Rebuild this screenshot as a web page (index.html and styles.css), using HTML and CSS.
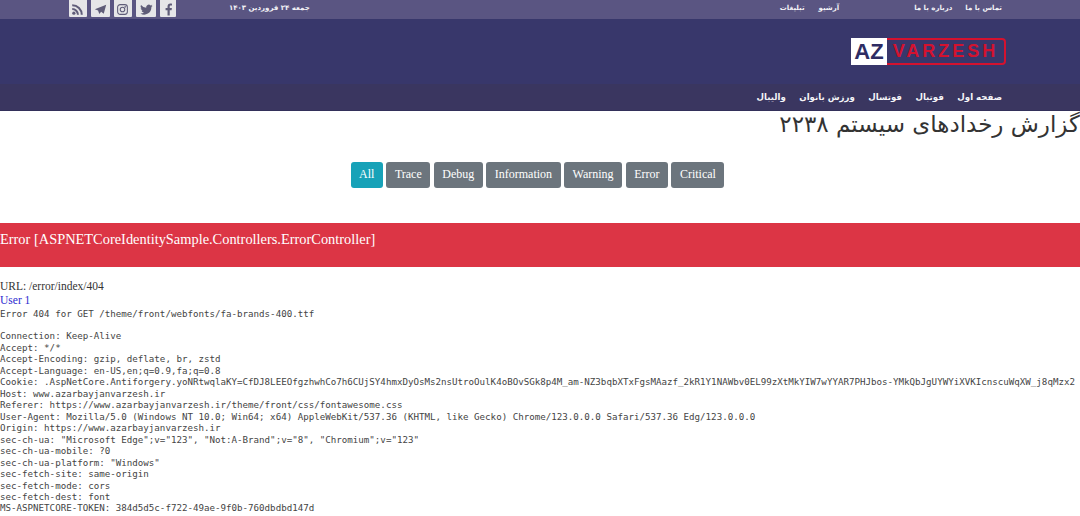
FILE: index.html
```html
<!DOCTYPE html>
<html lang="fa">
<head>
<meta charset="utf-8">
<title>گزارش رخدادهای سیستم</title>
<link rel="stylesheet" href="styles.css">
</head>
<body>
<header class="site-header">
  <div class="topbar">
    <nav class="social">
      <a class="social-btn"><svg viewBox="0 0 16 16"><circle cx="3.5" cy="12.5" r="2"/><path d="M1.5 6.2a8.3 8.3 0 0 1 8.3 8.3H7.3a5.8 5.8 0 0 0-5.8-5.8zM1.500 1.500a13 13 0 0 1 13 13H12A10.500 10.500 0 0 0 1.500 4z"/></svg></a>
      <a class="social-btn"><svg viewBox="0 0 16 16"><path d="M15 2 1 7.600l4 1.500 1.500 4.400 2.300-2.600 3.200 2.400z"/></svg></a>
      <a class="social-btn"><svg viewBox="0 0 16 16" class="outline"><rect x="2" y="2" width="12" height="12" rx="3.200"/><circle cx="8" cy="8" r="2.800"/><circle cx="11.400" cy="4.600" r=".4"/></svg></a>
      <a class="social-btn tw"><svg viewBox="0 0 16 16"><path d="M15.500 3.500c-.6.300-1.200.4-1.800.5.600-.4 1.100-1 1.300-1.700-.6.300-1.300.6-2 .7A3.100 3.100 0 0 0 7.700 5.800 8.900 8.900 0 0 1 1.300 2.500a3.100 3.100 0 0 0 1 4.200c-.5 0-1-.2-1.400-.4 0 1.500 1.100 2.800 2.500 3.100-.5.100-.9.100-1.400 0 .4 1.200 1.500 2.100 2.900 2.200A6.300 6.300 0 0 1 .5 12.900 8.800 8.800 0 0 0 14 5c.6-.4 1.100-.9 1.500-1.500z"/></svg></a>
      <a class="social-btn narrow"><svg viewBox="0 0 10 16"><path d="M6.500 15.500V8.800h2.300l.4-2.700H6.500V4.500c0-.8.300-1.300 1.400-1.300h1.400V.8C9 .8 8.200.700 7.300.700 5.200.700 3.800 2 3.800 4.200v1.900H1.400v2.700h2.400v6.700z"/></svg></a>
    </nav>
    <span class="date">جمعه ۲۴ فروردین ۱۴۰۳</span>
    <nav class="toplinks">
      <a class="wide-link">تبلیغات</a>
      <a class="archive">آرشیو</a>
      <a class="about">درباره با ما</a>
      <a>تماس با ما</a>
    </nav>
  </div>
  <div class="brand">
    <div class="logo"><span class="logo-az">AZ</span><span class="logo-varzesh">VARZESH</span></div>
  </div>
  <nav class="mainnav">
    <a>صفحه اول</a>
    <a>فوتبال</a>
    <a>فوتسال</a>
    <a>ورزش بانوان</a>
    <a>والیبال</a>
  </nav>
</header>
<main>
  <h1 class="page-title">گزارش رخدادهای سیستم ۲۲۳۸</h1>
  <div class="filters">
    <a class="btn btn-active">All</a>
    <a class="btn">Trace</a>
    <a class="btn">Debug</a>
    <a class="btn">Information</a>
    <a class="btn">Warning</a>
    <a class="btn">Error</a>
    <a class="btn">Critical</a>
  </div>
  <div class="log-head">Error [ASPNETCoreIdentitySample.Controllers.ErrorController]</div>
  <div class="log-meta">URL: /error/index/404</div>
  <div class="log-user">User 1</div>
  <pre class="log-body">Error 404 for GET /theme/front/webfonts/fa-brands-400.ttf

Connection: Keep-Alive
Accept: */*
Accept-Encoding: gzip, deflate, br, zstd
Accept-Language: en-US,en;q=0.9,fa;q=0.8
Cookie: .AspNetCore.Antiforgery.yoNRtwqlaKY=CfDJ8LEEOfgzhwhCo7h6CUjSY4hmxDyOsMs2nsUtroOulK4oBOvSGk8p4M_am-NZ3bqbXTxFgsMAazf_2kR1Y1NAWbv0EL99zXtMkYIW7wYYAR7PHJbos-YMkQbJgUYWYiXVKIcnscuWqXW_j8qMzx2
Host: www.azarbayjanvarzesh.ir
Referer: https://www.azarbayjanvarzesh.ir/theme/front/css/fontawesome.css
User-Agent: Mozilla/5.0 (Windows NT 10.0; Win64; x64) AppleWebKit/537.36 (KHTML, like Gecko) Chrome/123.0.0.0 Safari/537.36 Edg/123.0.0.0
Origin: https://www.azarbayjanvarzesh.ir
sec-ch-ua: "Microsoft Edge";v="123", "Not:A-Brand";v="8", "Chromium";v="123"
sec-ch-ua-mobile: ?0
sec-ch-ua-platform: "Windows"
sec-fetch-site: same-origin
sec-fetch-mode: cors
sec-fetch-dest: font
MS-ASPNETCORE-TOKEN: 384d5d5c-f722-49ae-9f0b-760dbdbd147d</pre>
</main>
</body>
</html>
```
FILE: styles.css
```css
* { box-sizing: border-box; }
html, body { margin: 0; height: 516px; overflow: hidden; background: #fff; }
body { font-family: "Liberation Serif", serif; color: #333; }

.topbar {
  height: 19px;
  background: #5a5582;
  display: flex;
  align-items: flex-end;
  overflow: hidden;
  color: #f2f2f6;
  font-family: "DejaVu Sans", sans-serif;
  font-size: 7px;
  font-weight: bold;
}
.social { display: flex; gap: 4px; margin-left: 68.500px; height: 25px; padding-bottom: 2px; flex: none; }
.social-btn {
  width: 18.500px;
  background: #e6e6e8;
  display: flex;
  align-items: flex-end;
  justify-content: center;
  padding-bottom: 1.500px;
  border-radius: 1px;
}
.social-btn.tw { width: 20px; }
.social-btn.narrow { width: 16px; }
.social-btn svg { width: 13px; height: 13px; fill: #5f5c78; }
.social-btn svg.outline { fill: none; stroke: #5f5c78; stroke-width: 1.300; }
.date { margin: 0 0 3px 53px; align-self: center; white-space: nowrap; }
.toplinks { margin: 0 78px 3px auto; display: flex; align-self: center; white-space: nowrap; }
.wide-link { margin-right: 14px; }
.archive { margin-right: 75px; }
.about { margin-right: 13px; }

.brand { height: 65px; background: #38376b; display: flex; justify-content: flex-end; align-items: center; padding-right: 74px; }
.logo { display: flex; height: 27px; font-family: "Liberation Sans", sans-serif; font-weight: bold; margin-top: -1px; }
.logo-az { width: 36px; background: #fff; color: #2e2c63; font-size: 22px; line-height: 27px; text-align: center; }
.logo-varzesh {
  width: 119px;
  border: 2px solid #d4122f;
  border-left: 0;
  border-radius: 0 4px 4px 0;
  background: #38376b;
  color: #d4122f;
  font-size: 18px;
  line-height: 23px;
  text-align: center;
  letter-spacing: 3px;
}

.mainnav {
  height: 27px;
  background: #3a3660;
  border-bottom: 1px solid #33305a;
  display: flex;
  flex-direction: row-reverse;
  align-items: center;
  gap: 13.500px;
  padding-right: 78px;
  color: #f5f5f8;
  font-family: "DejaVu Sans", sans-serif;
  font-size: 8.600px;
  font-weight: bold;
}

.page-title {
  margin: 0;
  height: 27px;
  direction: rtl;
  font-family: "DejaVu Sans", sans-serif;
  font-size: 23px;
  font-weight: normal;
  line-height: 27px;
  color: #333;
  white-space: nowrap;
}
.filters { display: flex; justify-content: center; gap: 3.500px; margin-top: 24px; padding-right: 5px; }
.btn {
  height: 26px;
  padding: 0 8.500px;
  background: #6c757d;
  color: #fff;
  font-size: 12px;
  line-height: 24px;
  border-radius: 3px;
}
.btn-active { background: #17a2b8; padding: 0 8.500px; }

.log-head {
  margin-top: 35px;
  height: 44px;
  background: #dc3545;
  color: #fff;
  font-size: 14.400px;
  line-height: 33px;
  white-space: nowrap;
}
.log-meta { margin-top: 12px; font-size: 11.500px; line-height: 14px; }
.log-user { font-size: 11.500px; line-height: 14px; color: #2b2bd0; }
.log-body {
  margin: 0.500px 0 0;
  font-family: "DejaVu Sans Mono", monospace;
  font-size: 9.165px;
  line-height: 11.470px;
  color: #444;
  white-space: pre;
}
```
